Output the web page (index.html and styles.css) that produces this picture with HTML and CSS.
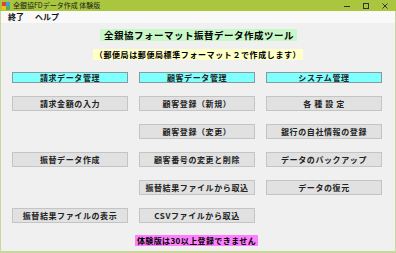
FILE: index.html
```html
<!DOCTYPE html>
<html lang="ja">
<head>
<meta charset="utf-8">
<link rel="stylesheet" href="styles.css">
</head>
<body>
<div class="window">
  <div class="titlebar">
    <svg class="appicon" width="8" height="8" viewBox="0 0 8 8">
      <rect x="0" y="0" width="4" height="4" fill="#e04040"/>
      <rect x="4" y="0" width="4" height="4" fill="#40a0e0"/>
      <rect x="0" y="4" width="4" height="4" fill="#f0c020"/>
      <rect x="4" y="4" width="4" height="4" fill="#50b050"/>
    </svg>
    <span class="title">全銀協FDデータ作成 体験版</span>
    <div class="controls">
      <svg width="8" height="8" viewBox="0 0 8 8"><line x1="1" y1="4.5" x2="7" y2="4.5" stroke="#333" stroke-width="1"/></svg>
      <svg width="8" height="8" viewBox="0 0 8 8"><rect x="1.5" y="1.5" width="5" height="5" fill="none" stroke="#333" stroke-width="1"/></svg>
      <svg width="8" height="8" viewBox="0 0 8 8"><path d="M1.5 1.5 L6.5 6.5 M6.5 1.5 L1.5 6.5" stroke="#333" stroke-width="1"/></svg>
    </div>
  </div>
  <div class="menubar">
    <span class="menuitem">終了</span>
    <span class="menuitem">ヘルプ</span>
  </div>
  <div class="content">
    <div class="heading">全銀協フォーマット振替データ作成ツール</div>
    <div class="note">（郵便局は郵便局標準フォーマット２で作成します）</div>
    <div class="grid">
      <div class="hdr">請求データ管理</div>
      <div class="hdr">顧客データ管理</div>
      <div class="hdr">システム管理</div>

      <div class="btn">請求金額の入力</div>
      <div class="btn">顧客登録（新規）</div>
      <div class="btn wide">各 種 設 定</div>

      <div class="empty"></div>
      <div class="btn">顧客登録（変更）</div>
      <div class="btn">銀行の自社情報の登録</div>

      <div class="btn">振替データ作成</div>
      <div class="btn">顧客番号の変更と削除</div>
      <div class="btn">データのバックアップ</div>

      <div class="empty"></div>
      <div class="btn">振替結果ファイルから取込</div>
      <div class="btn">データの復元</div>

      <div class="btn">振替結果ファイルの表示</div>
      <div class="btn">CSVファイルから取込</div>
      <div class="empty"></div>
    </div>
    <div class="trial">体験版は30以上登録できません</div>
  </div>
</div>
</body>
</html>
```

FILE: styles.css
```css
* { box-sizing: border-box; }
html, body { margin: 0; padding: 0; }
body {
  width: 396px;
  height: 253px;
  overflow: hidden;
  font-family: "Noto Sans CJK JP", "Noto Sans", sans-serif;
  color: #000;
}
.window {
  width: 396px;
  height: 253px;
  display: flex;
  flex-direction: column;
  background: #f0f0f0;
}
.titlebar {
  height: 11px;
  background: #a9c63e;
  display: flex;
  align-items: center;
  padding-left: 2px;
}
.appicon { flex: none; }
.title {
  font-size: 7px;
  line-height: 11px;
  margin-left: 3px;
  color: #1a1a1a;
}
.controls {
  margin-left: auto;
  display: flex;
  gap: 11px;
  padding-right: 7px;
}
.menubar {
  height: 12px;
  background: #f9f9f9;
  display: flex;
  align-items: center;
  padding-left: 7px;
  gap: 11px;
  border-left: 1px solid #c9d89a;
  border-right: 1px solid #c9d89a;
}
.menuitem {
  font-size: 8px;
  line-height: 12px;
  font-weight: bold;
  color: #111;
}
.content {
  flex: 1;
  display: flex;
  flex-direction: column;
  align-items: center;
  border-left: 1px solid #c9d89a;
  border-right: 1px solid #c9d89a;
  border-bottom: 2px solid #c9d89a;
  padding-top: 6px;
}
.heading {
  background: #c8f8c8;
  font-size: 9.5px;
  font-weight: bold;
  letter-spacing: 0.5px;
  line-height: 12px;
  height: 12px;
  padding: 0 3px 0 4px;
  margin-left: 1px;
}
.note {
  margin-top: 8px;
  background: #ffffc8;
  font-size: 8px;
  font-weight: bold;
  letter-spacing: 0.6px;
  line-height: 11px;
  height: 11px;
  padding: 0 2px;
}
.grid {
  margin-top: 12px;
  align-self: flex-start;
  margin-left: 11px;
  display: grid;
  grid-template-columns: repeat(3, 116px);
  grid-template-rows: 11px repeat(5, 15px);
  column-gap: 11px;
  row-gap: 13px;
}
.hdr, .btn {
  display: flex;
  align-items: center;
  justify-content: center;
  font-size: 8px;
  font-weight: bold;
  letter-spacing: 0.6px;
  color: #222;
}
.hdr {
  background: #80ffff;
  border: 1px solid #8a9a9a;
}
.btn {
  background: #e1e1e1;
  border: 1px solid #c4c4c4;
}
.trial {
  margin-top: 12px;
  background: #ff80ff;
  font-size: 8px;
  font-weight: bold;
  letter-spacing: 0.4px;
  line-height: 11px;
  height: 11px;
  padding: 0 2px;
  margin-left: -3px;
}
```
